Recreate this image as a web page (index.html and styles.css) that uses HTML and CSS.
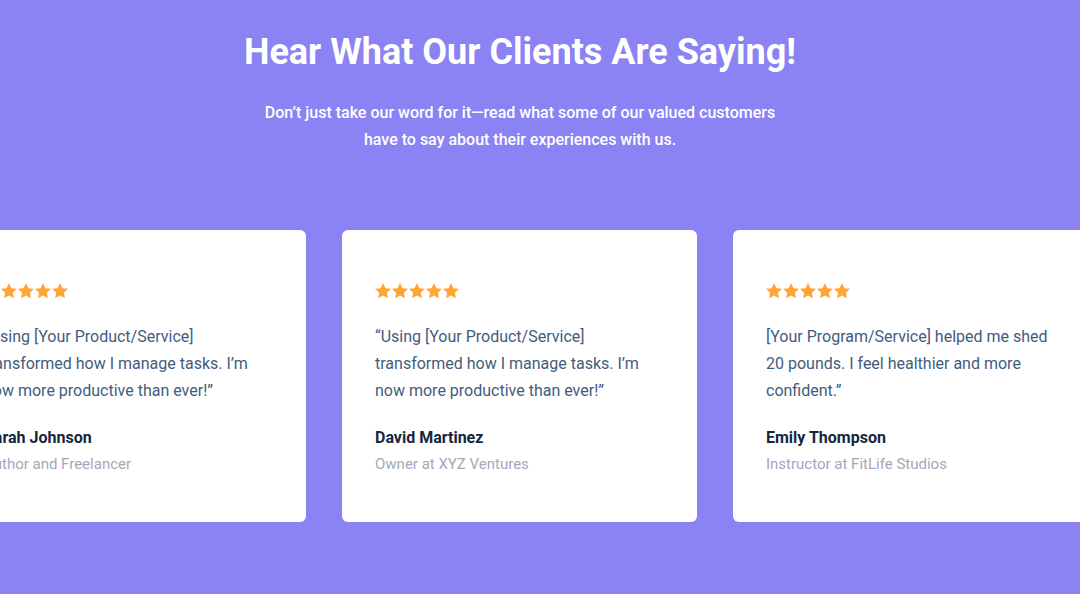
FILE: index.html
```html
<!DOCTYPE html>
<html lang="en">
<head>
<meta charset="utf-8">
<title>Testimonials</title>
<link rel="stylesheet" href="styles.css">
</head>
<body>
<section class="testimonials">
  <header class="intro">
    <h1 class="title">Hear What Our Clients Are Saying!</h1>
    <p class="lead">Don’t just take our word for it—read what some of our valued customers have to say about their experiences with us.</p>
  </header>
  <div class="viewport">
    <div class="track">
      <article class="card">
        <div class="stars" aria-label="5 stars">
          <svg viewBox="2.5 2.5 19 19"><path d="M12 2.5l2.9 6.1 6.6.8-4.9 4.6 1.3 6.6L12 17.3l-5.9 3.3 1.3-6.6-4.9-4.6 6.6-.8z"/></svg>
          <svg viewBox="2.5 2.5 19 19"><path d="M12 2.5l2.9 6.1 6.6.8-4.9 4.6 1.3 6.6L12 17.3l-5.9 3.3 1.3-6.6-4.9-4.6 6.6-.8z"/></svg>
          <svg viewBox="2.5 2.5 19 19"><path d="M12 2.5l2.9 6.1 6.6.8-4.9 4.6 1.3 6.6L12 17.3l-5.9 3.3 1.3-6.6-4.9-4.6 6.6-.8z"/></svg>
          <svg viewBox="2.5 2.5 19 19"><path d="M12 2.5l2.9 6.1 6.6.8-4.9 4.6 1.3 6.6L12 17.3l-5.9 3.3 1.3-6.6-4.9-4.6 6.6-.8z"/></svg>
          <svg viewBox="2.5 2.5 19 19"><path d="M12 2.5l2.9 6.1 6.6.8-4.9 4.6 1.3 6.6L12 17.3l-5.9 3.3 1.3-6.6-4.9-4.6 6.6-.8z"/></svg>
        </div>
        <p class="quote">“Using [Your Product/Service] transformed how I manage tasks. I’m now more productive than ever!”</p>
        <p class="name">Sarah Johnson</p>
        <p class="role">Author and Freelancer</p>
      </article>
      <article class="card">
        <div class="stars" aria-label="5 stars">
          <svg viewBox="2.5 2.5 19 19"><path d="M12 2.5l2.9 6.1 6.6.8-4.9 4.6 1.3 6.6L12 17.3l-5.9 3.3 1.3-6.6-4.9-4.6 6.6-.8z"/></svg>
          <svg viewBox="2.5 2.5 19 19"><path d="M12 2.5l2.9 6.1 6.6.8-4.9 4.6 1.3 6.6L12 17.3l-5.9 3.3 1.3-6.6-4.9-4.6 6.6-.8z"/></svg>
          <svg viewBox="2.5 2.5 19 19"><path d="M12 2.5l2.9 6.1 6.6.8-4.9 4.6 1.3 6.6L12 17.3l-5.9 3.3 1.3-6.6-4.9-4.6 6.6-.8z"/></svg>
          <svg viewBox="2.5 2.5 19 19"><path d="M12 2.5l2.9 6.1 6.6.8-4.9 4.6 1.3 6.6L12 17.3l-5.9 3.3 1.3-6.6-4.9-4.6 6.6-.8z"/></svg>
          <svg viewBox="2.5 2.5 19 19"><path d="M12 2.5l2.9 6.1 6.6.8-4.9 4.6 1.3 6.6L12 17.3l-5.9 3.3 1.3-6.6-4.9-4.6 6.6-.8z"/></svg>
        </div>
        <p class="quote">“Using [Your Product/Service] transformed how I manage tasks. I’m now more productive than ever!”</p>
        <p class="name">David Martinez</p>
        <p class="role">Owner at XYZ Ventures</p>
      </article>
      <article class="card">
        <div class="stars" aria-label="5 stars">
          <svg viewBox="2.5 2.5 19 19"><path d="M12 2.5l2.9 6.1 6.6.8-4.9 4.6 1.3 6.6L12 17.3l-5.9 3.3 1.3-6.6-4.9-4.6 6.6-.8z"/></svg>
          <svg viewBox="2.5 2.5 19 19"><path d="M12 2.5l2.9 6.1 6.6.8-4.9 4.6 1.3 6.6L12 17.3l-5.9 3.3 1.3-6.6-4.9-4.6 6.6-.8z"/></svg>
          <svg viewBox="2.5 2.5 19 19"><path d="M12 2.5l2.9 6.1 6.6.8-4.9 4.6 1.3 6.6L12 17.3l-5.9 3.3 1.3-6.6-4.9-4.6 6.6-.8z"/></svg>
          <svg viewBox="2.5 2.5 19 19"><path d="M12 2.5l2.9 6.1 6.6.8-4.9 4.6 1.3 6.6L12 17.3l-5.9 3.3 1.3-6.6-4.9-4.6 6.6-.8z"/></svg>
          <svg viewBox="2.5 2.5 19 19"><path d="M12 2.5l2.9 6.1 6.6.8-4.9 4.6 1.3 6.6L12 17.3l-5.9 3.3 1.3-6.6-4.9-4.6 6.6-.8z"/></svg>
        </div>
        <p class="quote">[Your Program/Service] helped me shed 20 pounds. I feel healthier and more confident.”</p>
        <p class="name">Emily Thompson</p>
        <p class="role">Instructor at FitLife Studios</p>
      </article>
    </div>
  </div>
</section>
</body>
</html>
```
FILE: styles.css
```css
* { box-sizing: border-box; }
html, body {
  margin: 0;
  padding: 0;
  height: 100%;
}
body {
  background: #8b82f3;
  font-family: Roboto, "Liberation Sans", sans-serif;
  overflow: hidden;
}
.testimonials {
  padding-top: 29px;
}
.intro {
  display: flex;
  flex-direction: column;
  align-items: center;
  text-align: center;
  padding-right: 40px;
}
.title {
  margin: 0;
  color: #ffffff;
  font-size: 36px;
  font-weight: 700;
  line-height: 46px;
}
.lead {
  margin: 24px 0 0;
  max-width: 530px;
  color: #ffffff;
  font-size: 16px;
  font-weight: 500;
  line-height: 27px;
}
.viewport {
  margin-top: 77px;
  overflow: hidden;
}
.track {
  display: flex;
  gap: 36px;
  margin-left: -49px;
}
.card {
  flex: 0 0 355px;
  height: 292px;
  background: #ffffff;
  border-radius: 6px;
  padding: 53px 33px 0;
}
.stars {
  display: flex;
  gap: 1px;
  height: 17px;
}
.stars svg {
  width: 16px;
  height: 16px;
  fill: #ffa534;
}
.quote {
  margin: 23px 0 0;
  color: #425c7e;
  font-size: 16px;
  line-height: 27px;
}
.name {
  margin: 20px 0 0;
  color: #15263e;
  font-size: 16px;
  font-weight: 700;
  line-height: 27px;
}
.role {
  margin: 0;
  color: #a4a7b9;
  font-size: 15px;
  line-height: 26px;
}
```
